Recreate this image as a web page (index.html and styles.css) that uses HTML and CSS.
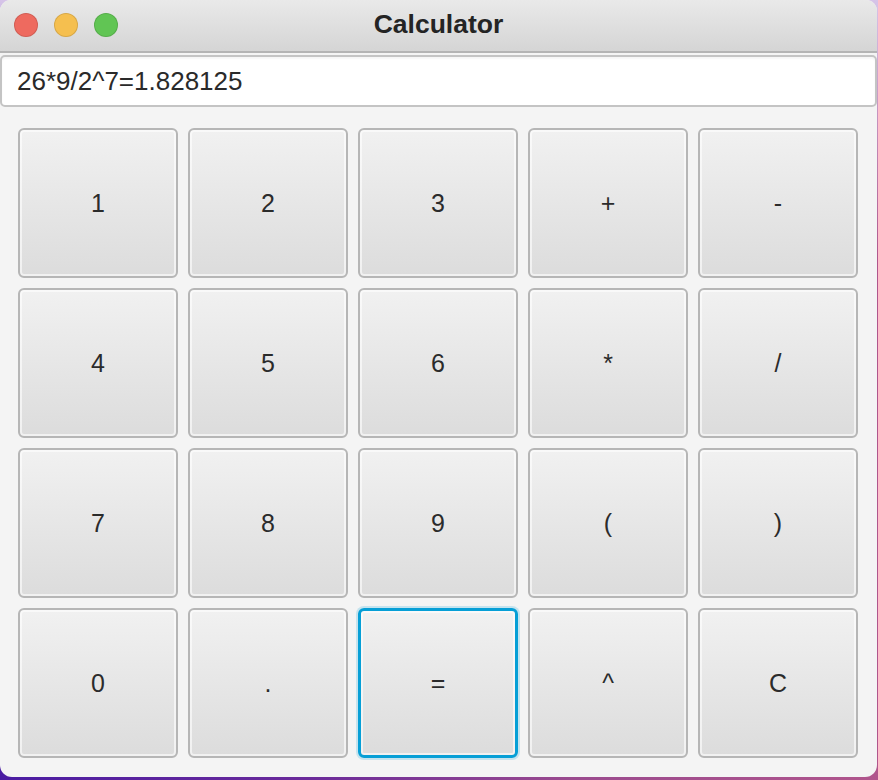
FILE: index.html
```html
<!DOCTYPE html>
<html>
<head>
<meta charset="utf-8">
<link rel="stylesheet" href="styles.css">
</head>
<body>
<div class="window">
  <div class="titlebar">
    <div class="lights">
      <span class="light red"></span>
      <span class="light yellow"></span>
      <span class="light green"></span>
    </div>
    <div class="title">Calculator</div>
  </div>
  <div class="field">26*9/2^7=1.828125</div>
  <div class="keys">
    <button class="key">1</button>
    <button class="key">2</button>
    <button class="key">3</button>
    <button class="key">+</button>
    <button class="key">-</button>
    <button class="key">4</button>
    <button class="key">5</button>
    <button class="key">6</button>
    <button class="key">*</button>
    <button class="key">/</button>
    <button class="key">7</button>
    <button class="key">8</button>
    <button class="key">9</button>
    <button class="key">(</button>
    <button class="key">)</button>
    <button class="key">0</button>
    <button class="key">.</button>
    <button class="key focused">=</button>
    <button class="key">^</button>
    <button class="key">C</button>
  </div>
</div>
</body>
</html>
```
FILE: styles.css
```css
html, body {
  margin: 0;
  padding: 0;
}
body {
  width: 878px;
  height: 780px;
  overflow: hidden;
  background:
    linear-gradient(180deg, rgba(214, 196, 232, 1) 0px, rgba(214, 196, 232, 0) 260px),
    linear-gradient(90deg, #4a1ca2 0%, #6a2a9a 35%, #9a4a8e 65%, #b0558c 100%);
  font-family: "Liberation Sans", Arial, sans-serif;
}
.window {
  width: 877px;
  height: 777px;
  background: #f4f4f4;
  border-radius: 11px 11px 12px 12px;
  overflow: hidden;
  display: flex;
  flex-direction: column;
}
.titlebar {
  height: 51px;
  flex: none;
  background: linear-gradient(180deg, #e9e9e9 0%, #d5d5d5 100%);
  border-bottom: 2px solid #b4b4b4;
  display: flex;
  align-items: center;
  justify-content: center;
  position: relative;
}
.lights {
  position: absolute;
  left: 14px;
  top: 13px;
  display: flex;
  gap: 16px;
}
.light {
  width: 22px;
  height: 22px;
  border-radius: 50%;
  border: 1px solid rgba(0,0,0,0.12);
}
.red { background: #ee6a5f; }
.yellow { background: #f5bf4f; }
.green { background: #61c554; }
.title {
  font-weight: bold;
  font-size: 26.5px;
  color: #242424;
  margin-top: -2px;
}
.field {
  margin-top: 2px;
  height: 48px;
  flex: none;
  background: #fff;
  border: 2px solid #c4c4c4;
  border-radius: 5px;
  box-shadow: inset 0 2px 2px rgba(0,0,0,0.04);
  padding-left: 15px;
  display: flex;
  align-items: center;
  font-size: 26px;
  color: #2a2a2a;
  box-sizing: content-box;
}
.keys {
  display: grid;
  grid-template-columns: repeat(5, 160px);
  grid-template-rows: repeat(4, 150px);
  gap: 10px;
  padding: 21px 19px 0 18px;
}
.key {
  box-sizing: border-box;
  border: 2px solid #b6b6b6;
  border-radius: 6px;
  background: linear-gradient(180deg, #f1f1f1 0%, #dcdcdc 100%);
  box-shadow: inset 0 0 0 2px rgba(255,255,255,0.6);
  font-family: "Liberation Sans", Arial, sans-serif;
  font-size: 25px;
  color: #2b2b2b;
  padding: 0;
  margin: 0;
}
.key.focused {
  border: 3px solid #069fd6;
  box-shadow: 0 0 0 2px rgba(10,160,216,0.2), inset 0 0 0 2px rgba(255,255,255,0.6);
}
```
